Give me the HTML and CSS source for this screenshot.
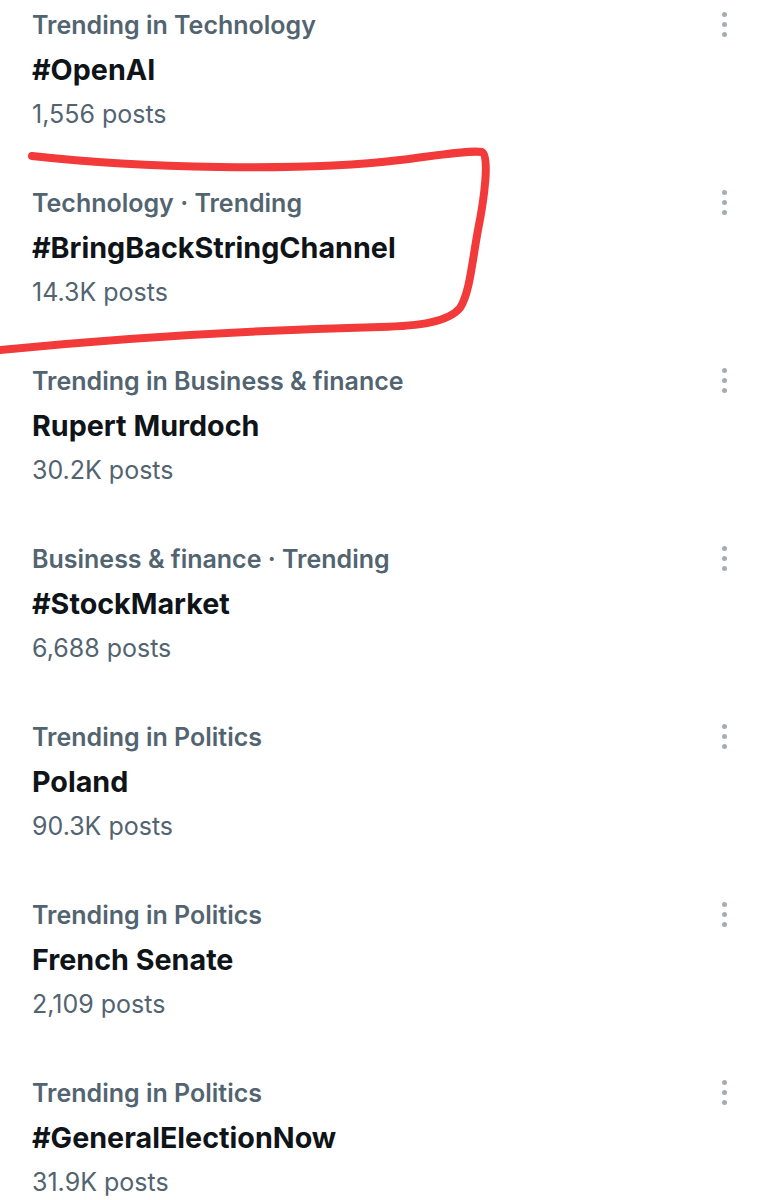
FILE: index.html
```html
<!DOCTYPE html>
<html>
<head>
<meta charset="utf-8">
<link rel="stylesheet" href="styles.css">
</head>
<body>
<div class="list">
  <div class="item">
    <div class="info">
      <div class="cat">Trending in Technology</div>
      <div class="title">#OpenAI</div>
      <div class="posts">1,556 posts</div>
    </div>
    <div class="more"><span></span><span></span><span></span></div>
  </div>
  <div class="item">
    <div class="info">
      <div class="cat">Technology · Trending</div>
      <div class="title">#BringBackStringChannel</div>
      <div class="posts">14.3K posts</div>
    </div>
    <div class="more"><span></span><span></span><span></span></div>
  </div>
  <div class="item">
    <div class="info">
      <div class="cat">Trending in Business &amp; finance</div>
      <div class="title">Rupert Murdoch</div>
      <div class="posts">30.2K posts</div>
    </div>
    <div class="more"><span></span><span></span><span></span></div>
  </div>
  <div class="item">
    <div class="info">
      <div class="cat">Business &amp; finance · Trending</div>
      <div class="title">#StockMarket</div>
      <div class="posts">6,688 posts</div>
    </div>
    <div class="more"><span></span><span></span><span></span></div>
  </div>
  <div class="item">
    <div class="info">
      <div class="cat">Trending in Politics</div>
      <div class="title">Poland</div>
      <div class="posts">90.3K posts</div>
    </div>
    <div class="more"><span></span><span></span><span></span></div>
  </div>
  <div class="item">
    <div class="info">
      <div class="cat">Trending in Politics</div>
      <div class="title">French Senate</div>
      <div class="posts">2,109 posts</div>
    </div>
    <div class="more"><span></span><span></span><span></span></div>
  </div>
  <div class="item">
    <div class="info">
      <div class="cat">Trending in Politics</div>
      <div class="title">#GeneralElectionNow</div>
      <div class="posts">31.9K posts</div>
    </div>
    <div class="more"><span></span><span></span><span></span></div>
  </div>
</div>
<svg class="scribble" width="764" height="360" viewBox="0 0 764 360">
  <path d="M32 156 C 140 168, 300 172, 400 160 C 440 155, 470 150, 482 152 C 490 156, 484 200, 478 230 C 472 262, 470 292, 460 308 C 448 322, 420 326, 380 327 C 260 330, 120 338, 0 350" fill="none" stroke="#f23a3a" stroke-width="8" stroke-linecap="round" stroke-linejoin="round"/>
</svg>
</body>
</html>
```
FILE: styles.css
```css
html, body {
  margin: 0;
  padding: 0;
  background: #ffffff;
}
body {
  font-family: Inter, "Open Sans", "Liberation Sans", sans-serif;
  width: 764px;
  height: 1200px;
  overflow: hidden;
  position: relative;
}
.list {
  display: flex;
  flex-direction: column;
  padding-top: 3px;
}
.item {
  display: flex;
  justify-content: space-between;
  align-items: flex-start;
  height: 178px;
  padding: 0 36px 0 32px;
}
.info {
  display: flex;
  flex-direction: column;
}
.cat {
  font-size: 25px;
  font-weight: 600;
  color: #536471;
  line-height: 44px;
}
.title {
  font-size: 28.7px;
  font-weight: 700;
  color: #0f1419;
  line-height: 45px;
}
.posts {
  font-size: 25px;
  font-weight: 400;
  color: #536471;
  line-height: 44px;
}
.more {
  display: flex;
  flex-direction: column;
  gap: 5px;
  padding-top: 9px;
  width: 8px;
  align-items: center;
}
.more span {
  width: 5px;
  height: 5px;
  border-radius: 50%;
  background: #a5adb4;
}
.scribble {
  position: absolute;
  left: 0;
  top: 0;
  pointer-events: none;
}
```
